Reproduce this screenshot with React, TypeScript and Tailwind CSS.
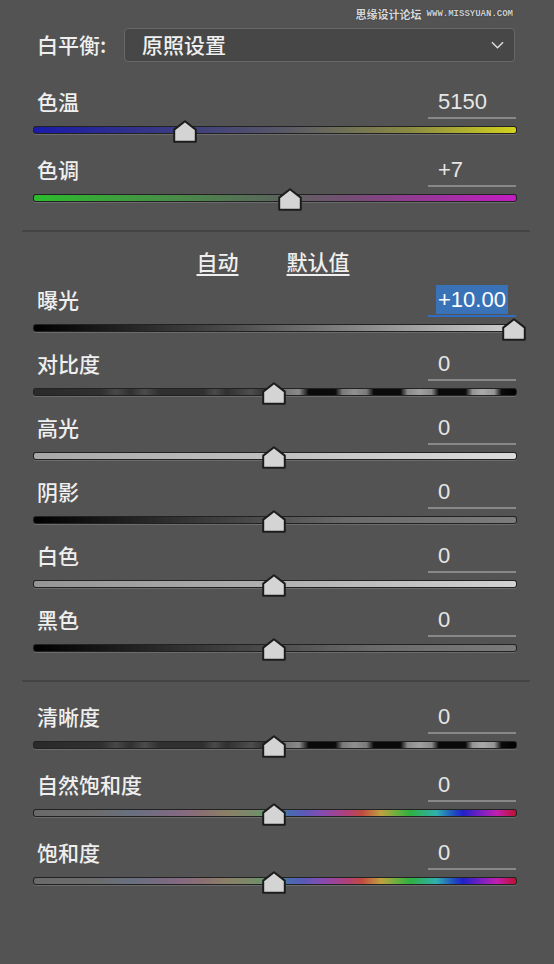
const TEMP_TINT = [
  {
    label: "色温",
    value: "5150",
    track: "bg-[linear-gradient(to_right,#1a1aa8_0%,#3c3c80_30%,#55556a_50%,#8a8a44_78%,#d2d21e_100%)]",
    thumb: "left-[140px]",
  },
  {
    label: "色调",
    value: "+7",
    track: "bg-[linear-gradient(to_right,#2cbc2c_0%,#4a8a4a_30%,#5a665a_50%,#7a4a7a_68%,#c41cc4_100%)]",
    thumb: "left-[245px]",
  },
];

const CONTRAST =
  "bg-[linear-gradient(to_right,#2a2a2a_0%,#303030_14%,#484848_17%,#303030_20%,#4c4c4c_23%,#303030_26%,#303030_35%,#4a4a4a_37.5%,#303030_40%,#4e4e4e_45%,#303030_48%,#5a5a5a_51%,#7a7a7a_52.5%,#8a8a8a_55%,#0a0a0a_57%,#0a0a0a_62.5%,#7a7a7a_64%,#909090_66.5%,#7a7a7a_69%,#0a0a0a_70.5%,#0a0a0a_76%,#8a8a8a_77.5%,#a0a0a0_80%,#8a8a8a_82.5%,#0a0a0a_84%,#0a0a0a_89.5%,#959595_91%,#aaaaaa_93%,#959595_95.5%,#0a0a0a_97%,#000000_100%)]";

const SATURATION =
  "bg-[linear-gradient(to_right,#6a6a6a_0%,#6c6c6c_13%,#687080_20%,#7a6a82_27%,#866a80_31%,#8a7070_35%,#8a8068_40%,#7a8a6a_45%,#5a9a6a_50%,#4a6ab0_53%,#5a5ab8_56%,#8a4ab0_60%,#b0407a_65%,#c04a40_68%,#c0a040_72%,#70b040_75%,#30b040_78%,#30b0b0_83.5%,#2050c0_87%,#2020c8_89%,#8020c0_93%,#c020b0_96%,#c01030_100%)]";

const TONE = [
  {
    label: "曝光",
    value: "+10.00",
    track: "bg-[linear-gradient(to_right,#000000_0%,#4a4a4a_40%,#d0d0d0_100%)]",
    thumb: "left-[469px]",
    active: true,
  },
  { label: "对比度", value: "0", track: CONTRAST, thumb: "left-[229px]" },
  {
    label: "高光",
    value: "0",
    track: "bg-[linear-gradient(to_right,#a8a8a8_0%,#c0c0c0_50%,#dcdcdc_100%)]",
    thumb: "left-[229px]",
  },
  {
    label: "阴影",
    value: "0",
    track: "bg-[linear-gradient(to_right,#000000_0%,#3a3a3a_35%,#6a6a6a_65%,#7c7c7c_100%)]",
    thumb: "left-[229px]",
  },
  {
    label: "白色",
    value: "0",
    track: "bg-[linear-gradient(to_right,#959595_0%,#b0b0b0_50%,#d2d2d2_100%)]",
    thumb: "left-[229px]",
  },
  {
    label: "黑色",
    value: "0",
    track: "bg-[linear-gradient(to_right,#000000_0%,#404040_40%,#6a6a6a_70%,#7a7a7a_100%)]",
    thumb: "left-[229px]",
  },
];

const PRESENCE = [
  { label: "清晰度", value: "0", track: CONTRAST, thumb: "left-[229px]" },
  { label: "自然饱和度", value: "0", track: SATURATION, thumb: "left-[229px]" },
  { label: "饱和度", value: "0", track: SATURATION, thumb: "left-[229px]" },
];

type SliderProps = {
  label: string;
  value: string;
  track: string;
  thumb: string;
  active?: boolean;
};

function Slider({ label, value, track, thumb, active }: SliderProps) {
  return (
    <div>
      <div className="flex justify-between h-[33px]">
        <span className="ml-[4px] text-[21px] font-medium leading-[31px]">{label}</span>
        <div
          className={`w-[88px] h-[33px] mr-[1px] border-b-2 ${
            active ? "border-[#2f6ec2]" : "border-[#888888]"
          } pl-[8px] flex items-center font-['Liberation_Sans',sans-serif] text-[22px] text-[#e6e6e6]`}
        >
          {active ? (
            <span className="bg-[#3a72b8] px-[2px] leading-[29px] text-white">{value}</span>
          ) : (
            <span className="pl-[2px]">{value}</span>
          )}
        </div>
      </div>
      <div className="relative h-[31px]">
        {/* track */}
        <div className="absolute top-[7px] left-0 right-0 h-[8px] rounded-[3px] bg-[#222222] px-[1px] py-[1px] shadow-[0_1px_0_#6c6c6c]">
          <div className={`h-full rounded-[2px] ${track}`} />
        </div>
        {/* thumb */}
        <svg viewBox="0 0 24 23" className={`absolute top-[1px] w-[24px] h-[23px] ${thumb}`}>
          <path
            d="M12 1.3 L22.8 9.6 V21.8 H1.2 V9.6 Z"
            fill="#d4d4d4"
            stroke="#1c1c1c"
            strokeWidth="2"
            strokeLinejoin="round"
          />
        </svg>
      </div>
    </div>
  );
}

export default function App() {
  return (
    <div className="w-[554px] h-[964px] overflow-hidden bg-[#535353] text-[#efefef] font-['Noto_Sans_CJK_SC','Noto_Sans',sans-serif]">
      {/* watermark */}
      <div className="h-[28px] flex items-center justify-end gap-[5px] pr-[41px]">
        <span className="text-[11px] font-bold leading-none text-[#d8d8d8] [text-shadow:0_0_1px_#222]">思缘设计论坛</span>
        <span className="text-[9px] font-bold leading-none text-[#d0d0d0] font-['Liberation_Mono',monospace] [text-shadow:0_0_1px_#222]">
          WWW.MISSYUAN.COM
        </span>
      </div>

      {/* white balance */}
      <div className="pl-[33px] pr-[37px]">
        <div className="flex items-center h-[34px]">
          <span className="ml-[4px] w-[87px] text-[21px] font-medium">白平衡:</span>
          <div className="flex-1 mr-[2px] h-full rounded-[4px] border border-[#686868] bg-[#474747] flex items-center justify-between pl-[17px] pr-[10px]">
            <span className="text-[21px] font-medium">原照设置</span>
            <svg viewBox="0 0 14 8" className="w-[13px] h-[8px]">
              <path d="M1 1 L7 7 L13 1" fill="none" stroke="#dddddd" strokeWidth="1.6" />
            </svg>
          </div>
        </div>

        <div className="mt-[24px] flex flex-col gap-[4px]">
          {TEMP_TINT.map((s) => (
            <Slider key={s.label} {...s} />
          ))}
        </div>
      </div>

      <div className="mt-[12px] ml-[22px] mr-[24px] h-[2px] bg-[#444444]" />

      {/* auto / default */}
      <div className="mt-[14px] h-[30px] flex justify-center gap-[48px] pr-[8px] text-[21px] font-medium leading-[30px]">
        <span className="underline underline-offset-[4px] decoration-[1.5px]">自动</span>
        <span className="underline underline-offset-[4px] decoration-[1.5px]">默认值</span>
      </div>

      <div className="mt-[8px] pl-[33px] pr-[37px]">
        {TONE.map((s) => (
          <Slider key={s.label} {...s} />
        ))}
      </div>

      <div className="mt-[12px] ml-[22px] mr-[24px] h-[2px] bg-[#444444]" />

      <div className="mt-[19px] pl-[33px] pr-[37px] flex flex-col gap-[4px]">
        {PRESENCE.map((s) => (
          <Slider key={s.label} {...s} />
        ))}
      </div>
    </div>
  );
}
